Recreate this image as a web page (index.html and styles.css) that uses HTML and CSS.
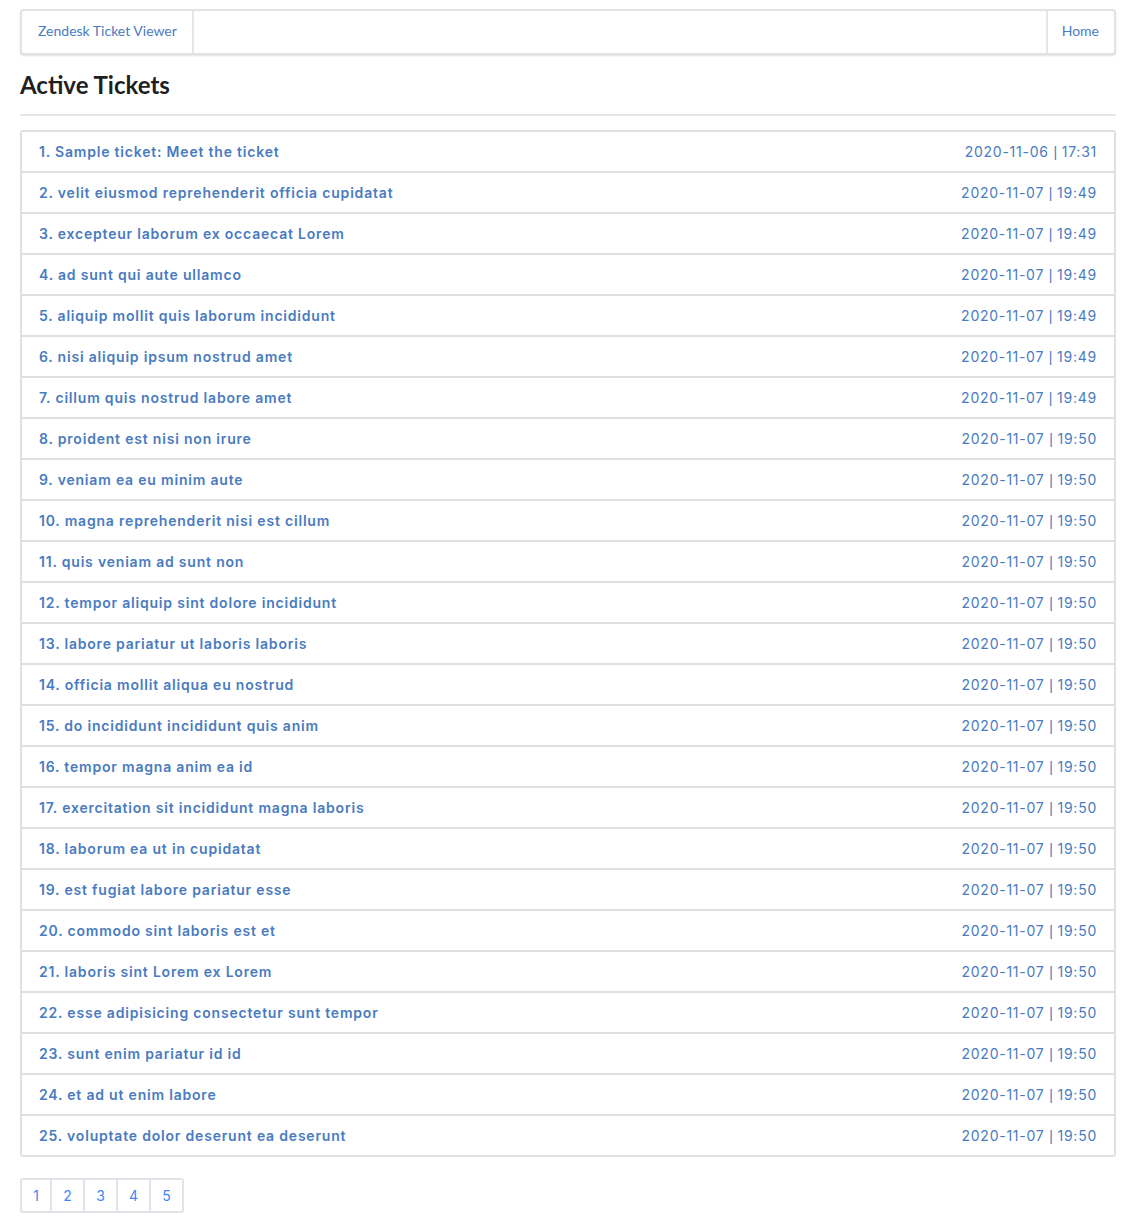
FILE: index.html
```html
<!DOCTYPE html>
<html>
<head>
<meta charset="utf-8">
<link rel="stylesheet" href="styles.css">
<title>Zendesk Ticket Viewer</title>
</head>
<body>
<nav class="menu">
  <a class="menu-item brand">Zendesk Ticket Viewer</a>
  <div class="menu-right">
    <a class="menu-item home">Home</a>
  </div>
</nav>
<h1 class="title">Active Tickets</h1>
<hr class="divider">
<ul class="tickets">
  <li class="ticket"><span class="subject">1. Sample ticket: Meet the ticket</span><span class="date">2020-11-06 <span class="sep">|</span> 17:31</span></li>
  <li class="ticket"><span class="subject">2. velit eiusmod reprehenderit officia cupidatat</span><span class="date">2020-11-07 <span class="sep">|</span> 19:49</span></li>
  <li class="ticket"><span class="subject">3. excepteur laborum ex occaecat Lorem</span><span class="date">2020-11-07 <span class="sep">|</span> 19:49</span></li>
  <li class="ticket"><span class="subject">4. ad sunt qui aute ullamco</span><span class="date">2020-11-07 <span class="sep">|</span> 19:49</span></li>
  <li class="ticket"><span class="subject">5. aliquip mollit quis laborum incididunt</span><span class="date">2020-11-07 <span class="sep">|</span> 19:49</span></li>
  <li class="ticket"><span class="subject">6. nisi aliquip ipsum nostrud amet</span><span class="date">2020-11-07 <span class="sep">|</span> 19:49</span></li>
  <li class="ticket"><span class="subject">7. cillum quis nostrud labore amet</span><span class="date">2020-11-07 <span class="sep">|</span> 19:49</span></li>
  <li class="ticket"><span class="subject">8. proident est nisi non irure</span><span class="date">2020-11-07 <span class="sep">|</span> 19:50</span></li>
  <li class="ticket"><span class="subject">9. veniam ea eu minim aute</span><span class="date">2020-11-07 <span class="sep">|</span> 19:50</span></li>
  <li class="ticket"><span class="subject">10. magna reprehenderit nisi est cillum</span><span class="date">2020-11-07 <span class="sep">|</span> 19:50</span></li>
  <li class="ticket"><span class="subject">11. quis veniam ad sunt non</span><span class="date">2020-11-07 <span class="sep">|</span> 19:50</span></li>
  <li class="ticket"><span class="subject">12. tempor aliquip sint dolore incididunt</span><span class="date">2020-11-07 <span class="sep">|</span> 19:50</span></li>
  <li class="ticket"><span class="subject">13. labore pariatur ut laboris laboris</span><span class="date">2020-11-07 <span class="sep">|</span> 19:50</span></li>
  <li class="ticket"><span class="subject">14. officia mollit aliqua eu nostrud</span><span class="date">2020-11-07 <span class="sep">|</span> 19:50</span></li>
  <li class="ticket"><span class="subject">15. do incididunt incididunt quis anim</span><span class="date">2020-11-07 <span class="sep">|</span> 19:50</span></li>
  <li class="ticket"><span class="subject">16. tempor magna anim ea id</span><span class="date">2020-11-07 <span class="sep">|</span> 19:50</span></li>
  <li class="ticket"><span class="subject">17. exercitation sit incididunt magna laboris</span><span class="date">2020-11-07 <span class="sep">|</span> 19:50</span></li>
  <li class="ticket"><span class="subject">18. laborum ea ut in cupidatat</span><span class="date">2020-11-07 <span class="sep">|</span> 19:50</span></li>
  <li class="ticket"><span class="subject">19. est fugiat labore pariatur esse</span><span class="date">2020-11-07 <span class="sep">|</span> 19:50</span></li>
  <li class="ticket"><span class="subject">20. commodo sint laboris est et</span><span class="date">2020-11-07 <span class="sep">|</span> 19:50</span></li>
  <li class="ticket"><span class="subject">21. laboris sint Lorem ex Lorem</span><span class="date">2020-11-07 <span class="sep">|</span> 19:50</span></li>
  <li class="ticket"><span class="subject">22. esse adipisicing consectetur sunt tempor</span><span class="date">2020-11-07 <span class="sep">|</span> 19:50</span></li>
  <li class="ticket"><span class="subject">23. sunt enim pariatur id id</span><span class="date">2020-11-07 <span class="sep">|</span> 19:50</span></li>
  <li class="ticket"><span class="subject">24. et ad ut enim labore</span><span class="date">2020-11-07 <span class="sep">|</span> 19:50</span></li>
  <li class="ticket"><span class="subject">25. voluptate dolor deserunt ea deserunt</span><span class="date">2020-11-07 <span class="sep">|</span> 19:50</span></li>
</ul>
<ul class="pagination">
  <li class="page">1</li>
  <li class="page">2</li>
  <li class="page">3</li>
  <li class="page">4</li>
  <li class="page">5</li>
</ul>
</body>
</html>
```
FILE: styles.css
```css
html, body {
  margin: 0;
  padding: 0;
  background: #ffffff;
}
body {
  padding: 9px 20px 0 20px;
  font-family: Lato, "Liberation Sans", sans-serif;
  color: #222;
}
.menu {
  display: flex;
  height: 46px;
  box-sizing: border-box;
  border: 2px solid #e3e3e3;
  border-radius: 4px;
  box-shadow: 0 1px 2px rgba(0,0,0,0.12);
  background: #fff;
}
.menu-item {
  display: flex;
  align-items: center;
  padding-bottom: 3px;
  font-size: 14px;
  color: #4a7bbf;
  text-decoration: none;
}
.brand {
  padding-left: 16px;
  padding-right: 15px;
  border-right: 2px solid #e6e6e6;
}
.menu-right {
  margin-left: auto;
  display: flex;
}
.home {
  padding-left: 14px;
  padding-right: 15px;
  border-left: 2px solid #e6e6e6;
}
.title {
  margin: 16px 0 0 0;
  font-family: Lato, "Liberation Sans", sans-serif;
  font-weight: 700;
  font-size: 24px;
  line-height: 28px;
  color: #1f1f1f;
}
.divider {
  margin: 15px 0 0 0;
  border: none;
  border-top: 2px solid #e6e6e6;
  height: 0;
}
.tickets {
  list-style: none;
  margin: 14px 0 0 0;
  padding: 0;
  border: 2px solid #e0e0e0;
  border-radius: 3px;
}
.ticket {
  display: flex;
  justify-content: space-between;
  align-items: center;
  height: 39px;
  padding: 0 17px;
  border-top: 2px solid #e0e0e0;
  font-family: Inter, "Noto Sans", sans-serif;
  font-size: 14px;
  color: #4a7bbf;
}
.ticket:first-child {
  border-top: none;
}
.subject {
  font-weight: 600;
  letter-spacing: 0.8px;
}
.date {
  font-weight: 400;
  letter-spacing: 0.75px;
}
.sep {
  font-family: "Liberation Sans", sans-serif;
  letter-spacing: 0;
}
.pagination {
  list-style: none;
  display: flex;
  margin: 21px 0 0 0;
  padding: 0;
}
.page {
  width: 31px;
  height: 31px;
  display: flex;
  align-items: center;
  justify-content: center;
  border: 2px solid #e0e3e8;
  margin-left: -2px;
  font-family: Inter, "Noto Sans", sans-serif;
  font-size: 14px;
  color: #4285f4;
}
.page:first-child {
  margin-left: 0;
  width: 28px;
  border-radius: 3px 0 0 3px;
}
.page:last-child {
  border-radius: 0 3px 3px 0;
}
```
